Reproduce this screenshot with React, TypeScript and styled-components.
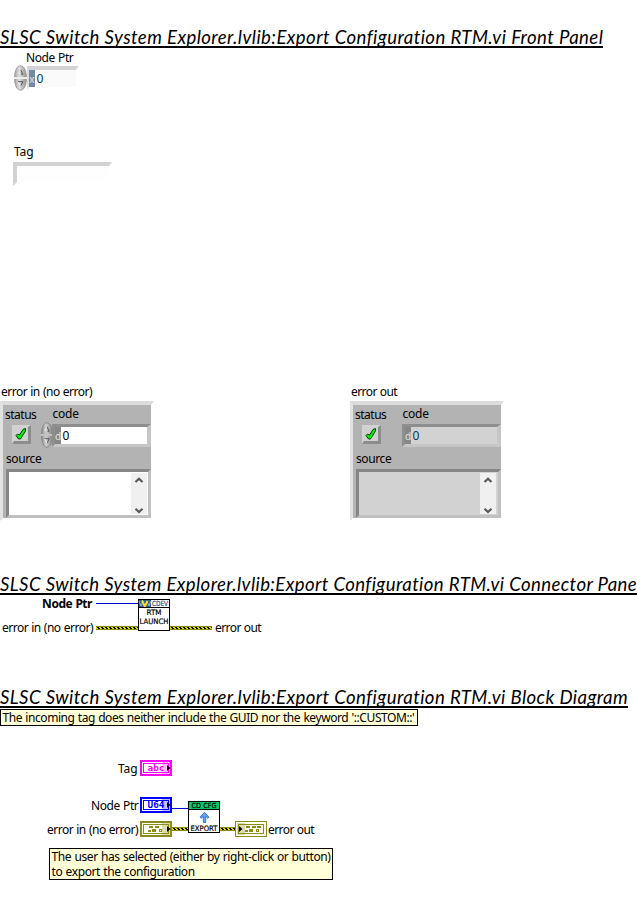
import React from "react";
import styled, { createGlobalStyle } from "styled-components";

const GlobalStyle = createGlobalStyle`
  body {
    margin: 0;
    background: #fff;
    color: #000;
    font-family: "Noto Sans", "Open Sans", sans-serif;
    font-size: 12px;
  }
`;

const Page = styled.main`
  width: 637px;
  height: 908px;
  box-sizing: border-box;
  padding-top: 26px;
  overflow: hidden;
  background: #fff;
`;

const Heading = styled.h1<{ $tracking: number }>`
  box-sizing: border-box;
  width: fit-content;
  height: 22px;
  margin: 0;
  overflow: hidden;
  border-bottom: 2px solid #000;
  font: italic 400 18.6px/23px Lato, sans-serif;
  letter-spacing: ${(p) => p.$tracking}px;
  white-space: nowrap;
`;

const Label = styled.div<{ $tracking?: number; $indent?: number; $bold?: boolean }>`
  height: 14px;
  line-height: 14px;
  padding-left: ${(p) => p.$indent ?? 0}px;
  letter-spacing: ${(p) => p.$tracking ?? -0.42}px;
  word-spacing: 0.5px;
  font-weight: ${(p) => (p.$bold ? 700 : 400)};
  white-space: nowrap;
`;

/* ---------- front panel ---------- */

const FrontPanel = styled.section`
  box-sizing: border-box;
  height: 525px;
  padding-top: 3px;
`;

const NodePtrRow = styled.div`
  display: flex;
  height: 26px;
  padding-left: 14px;
`;

const PointerField = styled.div`
  display: flex;
  box-sizing: border-box;
  width: 52px;
  height: 24px;
  margin: 1px 0 0;
  border: 3px solid #fff;
  border-top: 4px solid #d4d4d4;
  border-left: 2px solid #dcdcdc;
  background: #fafafa;
`;

const Radix = styled.span<{ $panel?: boolean }>`
  width: 6px;
  flex: none;
  overflow: hidden;
  background: ${(p) => (p.$panel ? "#868686" : "#7488a8")};
  color: #e2e2e2;
  font-size: 10px;
  line-height: 18px;
  text-align: center;
`;

const Digits = styled.span<{ $blue?: boolean }>`
  padding-left: 1.5px;
  line-height: 17px;
  color: ${(p) => (p.$blue ? "#00376e" : "#000")};
`;

const TagBlock = styled.div`
  padding: 54px 0 0 13px;
`;

const TagField = styled.div`
  box-sizing: border-box;
  width: 99px;
  height: 24px;
  margin-top: 3px;
  border: 4px solid #fff;
  border-top-color: #d2d2d2;
  border-left-color: #d2d2d2;
  border-right-width: 3px;
  background: #fefefe;
`;

const ErrorRow = styled.div`
  display: grid;
  grid-template-columns: 350px 155px;
  padding-top: 199px;
`;

const Cluster = styled.div`
  box-sizing: border-box;
  width: 154px;
  height: 120px;
  margin-top: 2px;
  border: 3px solid #fff;
  border-top: 4px solid #dcdcdc;
  border-left-color: #e2e2e2;
  background: #b3b3b3;
  padding-top: 2px;
`;

const ClusterTop = styled.div`
  display: grid;
  grid-template-columns: 36px 112px;
  height: 45px;
`;

const StatusCell = styled.div`
  padding-top: 1px;
`;

const StatusButton = styled.div`
  box-sizing: border-box;
  display: flex;
  width: 19px;
  height: 19px;
  margin: 3px 0 0 9px;
  border: 2px solid #d2d2d2;
  border-right: 3px solid #8c8c8c;
  border-bottom: 3px solid #8c8c8c;
  background: #d0d0d0;
`;

const CodeRow = styled.div`
  display: flex;
  height: 25px;
  padding-top: 1px;
`;

const SpinnerSlot = styled.div`
  width: 11px;
  flex: none;
  padding-left: 2px;
`;

const CodeField = styled.div<{ $fill: string }>`
  display: flex;
  box-sizing: border-box;
  width: 99px;
  height: 23px;
  margin-top: 2px;
  border: 3px solid #c6c6c6;
  border-top-color: #8e8e8e;
  border-left-color: #8e8e8e;
  border-right-width: 4px;
  background: ${(p) => p.$fill};
`;

const SourceField = styled.div<{ $fill: string }>`
  box-sizing: border-box;
  display: flex;
  justify-content: flex-end;
  width: 145px;
  height: 49px;
  margin: 3px 0 0 3px;
  border: 3px solid #c0c0c0;
  border-top-color: #868686;
  border-left-color: #868686;
  background: ${(p) => p.$fill};
`;

const ScrollTrack = styled.div<{ $inset: number }>`
  display: flex;
  flex-direction: column;
  justify-content: space-between;
  width: 16px;
  height: 41px;
  margin: 1px ${(p) => p.$inset}px 0 0;
  background: #f0f0f0;
`;

const Spinner = ({ dark = false }: { dark?: boolean }) => (
  <svg width={dark ? 12 : 13} height="26" viewBox="0 0 13 26" preserveAspectRatio="none">
    <defs>
      <linearGradient id={dark ? "knobDark" : "knob"} x1="0" x2="1">
        <stop offset="0" stopColor={dark ? "#8e8e8e" : "#a4a4a4"} />
        <stop offset=".4" stopColor={dark ? "#cecece" : "#dedede"} />
        <stop offset="1" stopColor={dark ? "#858585" : "#929292"} />
      </linearGradient>
    </defs>
    <path
      d="M.6 12.5C.6 5 3.2.8 6.5.8S12.4 5 12.4 12.5zM.6 13.5C.6 21 3.2 25.2 6.5 25.2S12.4 21 12.4 13.5z"
      fill={`url(#${dark ? "knobDark" : "knob"})`}
      stroke={dark ? "#7d7d84" : "#909090"}
      strokeWidth=".8"
    />
    <path d="M0 13h13" stroke={dark ? "#d0d0d0" : "#fff"} strokeWidth="1.6" />
    <path d="M3.8 9 6.5 5" fill="none" stroke="#eee" />
    <path d="M6.8 5 8.8 9.3H7.2M4 16.7h5L6.6 21" fill="none" stroke="#555" />
    <path d="M4.3 17 6.2 21" stroke="#eee" />
  </svg>
);

const CheckMark = () => (
  <svg width="14" height="14" viewBox="0 0 14 14">
    <path d="M2 8.5 3.5 7 5.5 8 9 2.5 11.5 1.5V4L6.5 12H4.5Z" fill="#00f000" stroke="#053b05" strokeWidth="1" />
  </svg>
);

const Chevron = ({ down = false }: { down?: boolean }) => (
  <svg width="16" height="13" viewBox="0 0 16 13">
    <path d={down ? "M4.5 7.8 8 11 11.5 7.8" : "M4.5 9 8 5.8 11.5 9"} fill="none" stroke="#585858" strokeWidth="2.2" />
  </svg>
);

type ErrorClusterProps = { title: string; titleTracking: number; readOnly?: boolean };

const ErrorCluster = ({ title, titleTracking, readOnly }: ErrorClusterProps) => {
  const fill = readOnly ? "#d2d2d2" : "#fff";
  return (
    <div>
      <Label $indent={1} $tracking={titleTracking}>{title}</Label>
      <Cluster>
        <ClusterTop>
          <StatusCell>
            <Label $indent={2} $tracking={-0.5}>status</Label>
            <StatusButton><CheckMark /></StatusButton>
          </StatusCell>
          <div>
            <Label $indent={13.5} $tracking={-0.25}>code</Label>
            <CodeRow>
              <SpinnerSlot>{!readOnly && <Spinner dark />}</SpinnerSlot>
              <CodeField $fill={fill}>
                <Radix $panel>d</Radix>
                <Digits $blue={readOnly}>0</Digits>
              </CodeField>
            </CodeRow>
          </div>
        </ClusterTop>
        <Label $indent={3} $tracking={-0.4}>source</Label>
        <SourceField $fill={fill}>
          <ScrollTrack $inset={readOnly ? 2 : 1}><Chevron /><Chevron down /></ScrollTrack>
        </SourceField>
      </Cluster>
    </div>
  );
};

/* ---------- connector pane ---------- */

const ConnectorPane = styled.section`
  box-sizing: border-box;
  display: flex;
  height: 91px;
  padding-top: 2px;
`;

const Terminals = styled.div<{ $width: number }>`
  display: flex;
  flex-direction: column;
  justify-content: space-between;
  align-items: flex-end;
  box-sizing: border-box;
  width: ${(p) => p.$width}px;
  height: 38px;
`;

const TerminalLine = styled.div<{ $gap: number }>`
  display: flex;
  align-items: center;
  gap: ${(p) => p.$gap}px;
  height: 14px;
`;

const Wire = styled.span<{ $width: number }>`
  width: ${(p) => p.$width}px;
  height: 1px;
  margin-bottom: 1px;
  background: #0000d8;
`;

const IconSlot = styled.div`
  height: 32px;
  margin-top: 2px;
  line-height: 0;
`;

const OutputTerminals = styled.div`
  display: flex;
  align-items: flex-end;
  height: 38px;
`;

const ErrorWire = ({ width }: { width: number }) => (
  <svg width={width} height="4" viewBox={`0 0 ${width} 4`} shapeRendering="crispEdges">
    <rect width={width} height="4" fill="#8c8c00" />
    <rect y="1" width={width} height="2" fill="#d8d800" />
    <line x1="1" x2={width} y1="1.5" y2="1.5" stroke="#000" strokeWidth="1" strokeDasharray="2 2" />
    <line x1="2" x2={width} y1="2.5" y2="2.5" stroke="#000" strokeWidth="1" strokeDasharray="2 2" />
  </svg>
);

const IconText = styled.text`
  font-family: "DejaVu Sans", sans-serif;
  font-size: 7.5px;
`;

const BadgeText = styled(IconText)`
  font-size: 7px;
`;

const LaunchIcon = () => (
  <svg width="32" height="32" viewBox="0 0 32 32" overflow="visible">
    <rect x=".5" y=".5" width="31" height="31" fill="#fff" stroke="#000" />
    <rect x="1" y="1" width="12" height="7" fill="#2d5f93" />
    <path d="M1 2l2 5 2-5M9 2l2 5 2-5" fill="none" stroke="#8cb4d6" />
    <path d="M4 1.5 6.8 7.5 9.5 2" fill="none" stroke="#ffdc18" strokeWidth="2" />
    <BadgeText x="14" y="7.2" textLength="16" lengthAdjust="spacingAndGlyphs" fill="#1c5488" stroke="#1c5488" strokeWidth=".2">CDEV</BadgeText>
    <path d="M1 8.5h30" stroke="#000" />
    <IconText x="8.5" y="16" textLength="15" lengthAdjust="spacingAndGlyphs" stroke="#000" strokeWidth=".2">RTM</IconText>
    <IconText x="1.5" y="25" textLength="29" lengthAdjust="spacingAndGlyphs" stroke="#000" strokeWidth=".2">LAUNCH</IconText>
  </svg>
);

/* ---------- block diagram ---------- */

const Diagram = styled.section`
  position: relative;
  height: 200px;
`;

const Node = styled.div<{ $x: number; $y: number }>`
  position: absolute;
  left: ${(p) => p.$x}px;
  top: ${(p) => p.$y}px;
  line-height: 0;
`;

const Comment = styled.div<{ $width: number; $tracking: number }>`
  box-sizing: border-box;
  width: ${(p) => p.$width}px;
  padding: 0 0 0 1.5px;
  border: 1px solid #000;
  background: #ffffd8;
  line-height: 15px;
  letter-spacing: ${(p) => p.$tracking}px;
  word-spacing: 0.5px;
  white-space: nowrap;
`;

const Glyphs = styled.text`
  font-family: "DejaVu Sans Mono", monospace;
  font-size: 9px;
  font-weight: 700;
`;

const ValueTerminal = ({ color, text }: { color: string; text: string }) => (
  <svg width="32" height="16" viewBox="0 0 32 16">
    <rect x="1" y="1" width="30" height="14" fill="#fff" stroke={color} strokeWidth="2" />
    <rect x="3.5" y="3.5" width="25" height="9" fill="#fff" stroke={color} />
    <Glyphs x="7.5" y="11.2" textLength="17" lengthAdjust="spacingAndGlyphs" fill={color}>{text}</Glyphs>
    <rect x="22" y="2" width="8" height="12" fill={color} opacity=".25" />
    <path d="M27 5v6l3.5-3z" fill="#000" />
  </svg>
);

const ClusterTerminal = ({ output = false }: { output?: boolean }) => (
  <svg width="32" height="16" viewBox="0 0 32 16">
    {output ? (
      <rect x=".5" y=".5" width="31" height="15" fill="#fffff0" stroke="#8c8c1c" />
    ) : (
      <rect x="1" y="1" width="30" height="14" fill="#fffff0" stroke="#8c8c1c" strokeWidth="2" />
    )}
    <rect x="3.5" y="3.5" width="25" height="9" fill="#fffff0" stroke="#8c8c1c" />
    <g transform={output ? "translate(2 0)" : undefined} shapeRendering="crispEdges">
      <path d="M9 5h4v2H9zM15 5h4v2h-4zM8 9h3v2H8zM12 8h4v3h-4z" fill="#8c8c1c" />
      <path d="M19.5 8.5h2v2h-2z" fill="none" stroke="#8c8c1c" />
    </g>
    {output && <path d="M22 6h4" stroke="#8c8c1c" strokeWidth="2" shapeRendering="crispEdges" />}
    <rect x={output ? 2 : 22} y="2" width="8" height="12" fill="#8c8c1c" opacity=".3" />
    <path d={output ? "M4 5v6l3.5-3z" : "M27 5v6l3.5-3z"} fill="#000" />
  </svg>
);

const ExportIcon = () => (
  <svg width="32" height="32" viewBox="0 0 32 32">
    <rect x=".5" y=".5" width="31" height="31" fill="#fff" stroke="#000" />
    <rect x="1" y="1" width="30" height="7" fill="#00cc66" />
    <path d="M1 8.5h30" stroke="#000" />
    <BadgeText x="3.5" y="7.2" textLength="25" lengthAdjust="spacingAndGlyphs" stroke="#000" strokeWidth=".2">CD CFG</BadgeText>
    <path d="M16.5 11.3 21 16.2l-1.3 1-2-1.8V21.5h-2.4V15.4l-2 1.8-1.3-1z" fill="#62a5ff" stroke="#2463c4" strokeWidth=".8" />
    <IconText x="2.5" y="29.5" textLength="27" lengthAdjust="spacingAndGlyphs" stroke="#000" strokeWidth=".2">EXPORT</IconText>
  </svg>
);

const title = "SLSC Switch System Explorer.lvlib:Export Configuration RTM.vi ";

export default function App() {
  return (
    <Page>
      <GlobalStyle />
      <Heading $tracking={0.42}>{title}Front Panel</Heading>
      <FrontPanel>
        <Label $indent={26}>Node Ptr</Label>
        <NodePtrRow>
          <Spinner />
          <PointerField>
            <Radix>x</Radix>
            <Digits $blue>0</Digits>
          </PointerField>
        </NodePtrRow>
        <TagBlock>
          <Label $indent={1} $tracking={-0.1}>Tag</Label>
          <TagField />
        </TagBlock>
        <ErrorRow>
          <ErrorCluster title="error in (no error)" titleTracking={-0.5} />
          <ErrorCluster title="error out" titleTracking={-0.58} readOnly />
        </ErrorRow>
      </FrontPanel>

      <Heading $tracking={0.39}>{title}Connector Pane</Heading>
      <ConnectorPane>
        <Terminals $width={138}>
          <TerminalLine $gap={4}>
            <Label $bold $tracking={-0.47}>Node Ptr</Label>
            <Wire $width={42} />
          </TerminalLine>
          <TerminalLine $gap={3}>
            <Label $tracking={-0.5}>error in (no error)</Label>
            <ErrorWire width={42} />
          </TerminalLine>
        </Terminals>
        <IconSlot><LaunchIcon /></IconSlot>
        <OutputTerminals>
          <TerminalLine $gap={3}>
            <ErrorWire width={42} />
            <Label $tracking={-0.58}>error out</Label>
          </TerminalLine>
        </OutputTerminals>
      </ConnectorPane>

      <Heading $tracking={0.41}>{title}Block Diagram</Heading>
      <Diagram>
        <Node $x={0} $y={1}>
          <Comment $width={418} $tracking={-0.42}>
            The incoming tag does neither include the GUID nor the keyword '::CUSTOM::'
          </Comment>
        </Node>
        <Node $x={118} $y={54}><Label $tracking={-0.1}>Tag</Label></Node>
        <Node $x={140} $y={52}><ValueTerminal color="#ff00ff" text="abc" /></Node>
        <Node $x={91} $y={91}><Label>Node Ptr</Label></Node>
        <Node $x={140} $y={89}><ValueTerminal color="#0000ff" text="U64" /></Node>
        <Node $x={172} $y={97}><svg width="16" height="1"><rect width="16" height="1" fill="#0000c8" /></svg></Node>
        <Node $x={47} $y={115}><Label $tracking={-0.5}>error in (no error)</Label></Node>
        <Node $x={140} $y={113}><ClusterTerminal /></Node>
        <Node $x={172} $y={119}><ErrorWire width={16} /></Node>
        <Node $x={188} $y={93}><ExportIcon /></Node>
        <Node $x={220} $y={119}><ErrorWire width={15} /></Node>
        <Node $x={235} $y={113}><ClusterTerminal output /></Node>
        <Node $x={268} $y={115}><Label $tracking={-0.58}>error out</Label></Node>
        <Node $x={49} $y={140}>
          <Comment $width={284} $tracking={-0.39}>
            The user has selected (either by right-click or button)
            <br />
            to export the configuration
          </Comment>
        </Node>
      </Diagram>
    </Page>
  );
}
